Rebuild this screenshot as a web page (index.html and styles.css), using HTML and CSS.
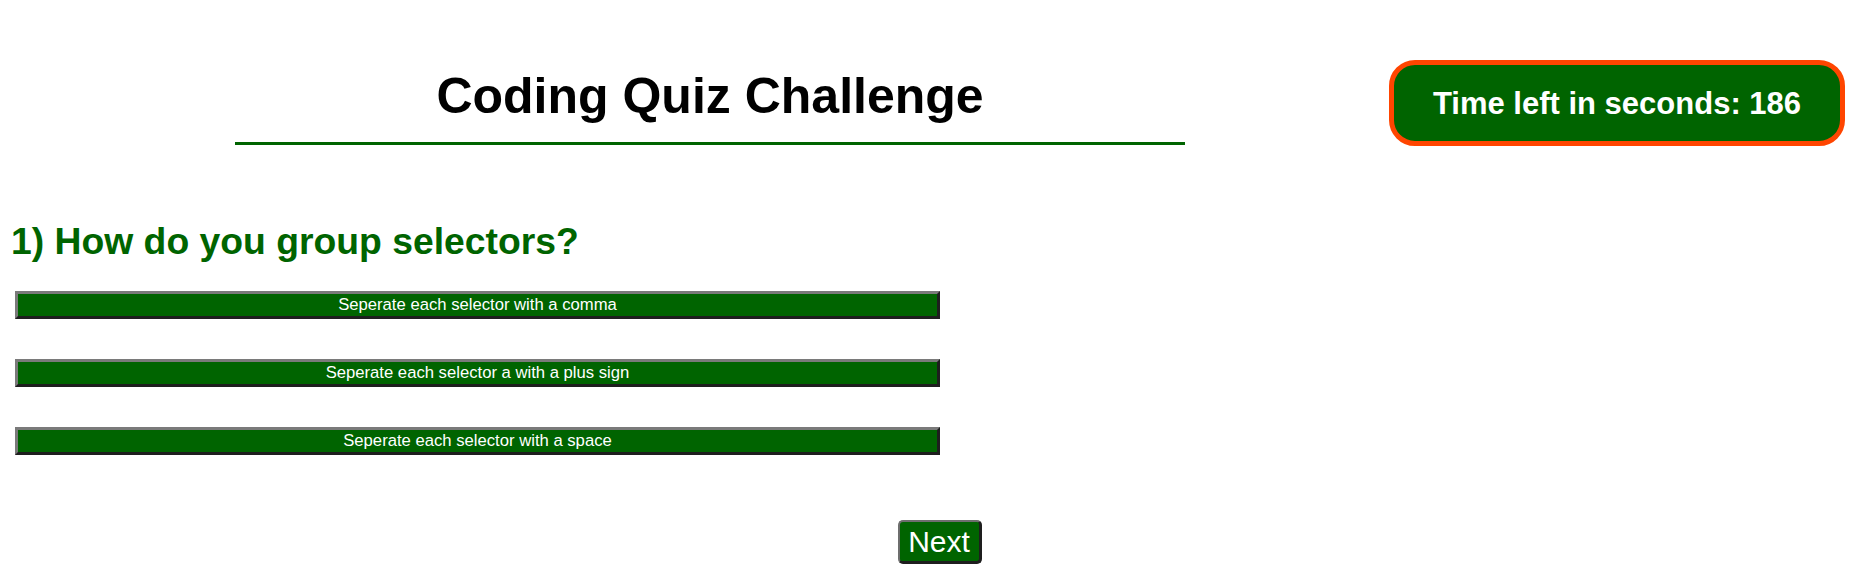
FILE: index.html
```html
<!DOCTYPE html>
<html lang="en">
<head>
<meta charset="utf-8">
<title>Coding Quiz Challenge</title>
<link rel="stylesheet" href="styles.css">
</head>
<body>
  <header class="header">
    <h1 class="title">Coding Quiz Challenge</h1>
    <div class="timer">Time left in seconds: 186</div>
  </header>
  <main class="quiz">
    <h2 class="question">1) How do you group selectors?</h2>
    <div class="answers">
      <button class="answer">Seperate each selector with a comma</button>
      <button class="answer">Seperate each selector a with a plus sign</button>
      <button class="answer">Seperate each selector with a space</button>
    </div>
    <div class="nav">
      <button class="next">Next</button>
    </div>
  </main>
</body>
</html>
```

FILE: styles.css
```css
html, body {
  margin: 0;
  padding: 0;
  background: #ffffff;
}

body {
  font-family: "Liberation Sans", Arial, sans-serif;
  width: 1873px;
  height: 568px;
  overflow: hidden;
}

.header {
  display: flex;
  align-items: flex-start;
}

.title {
  flex: 0 0 950px;
  margin: 67px 0 0 235px;
  padding: 0 0 17px;
  font-size: 50px;
  line-height: 58px;
  font-weight: bold;
  color: #000000;
  text-align: center;
  border-bottom: 3px solid #006400;
}

.timer {
  box-sizing: border-box;
  width: 456px;
  margin: 60px 28px 0 auto;
  padding: 21px 0 19px;
  background: #006400;
  border: 5px solid #ff4500;
  border-radius: 26px;
  color: #ffffff;
  font-size: 31px;
  line-height: 36px;
  font-weight: bold;
  text-align: center;
}

.quiz {
  padding: 0 0 0 11px;
}

.question {
  margin: 74px 0 0;
  font-size: 37.3px;
  line-height: 43px;
  font-weight: bold;
  color: #006400;
}

.answers {
  display: flex;
  flex-direction: column;
  gap: 40px;
  width: 925px;
  margin: 28px 0 0 4px;
}

.answer {
  box-sizing: border-box;
  display: block;
  width: 925px;
  height: 28px;
  margin: 0;
  padding: 0;
  background: #006400;
  color: #ffffff;
  font-family: "Liberation Sans", Arial, sans-serif;
  font-size: 16.67px;
  line-height: 20px;
  border-style: solid;
  border-width: 3px;
  border-color: #7a7a7a #1e1e1e #1e1e1e #7a7a7a;
  text-align: center;
}

.nav {
  display: flex;
  justify-content: center;
  margin: 65px 0 0;
  padding-right: 5px;
}

.next {
  box-sizing: border-box;
  height: 44px;
  width: 84px;
  padding: 0;
  background: #006400;
  color: #ffffff;
  font-family: "Liberation Sans", Arial, sans-serif;
  font-size: 30px;
  line-height: 36px;
  border-style: solid;
  border-width: 2px 3px 3px 2px;
  border-color: #6e6e6e #1e1e1e #1e1e1e #6e6e6e;
  border-radius: 5px;
  text-align: center;
}
```
